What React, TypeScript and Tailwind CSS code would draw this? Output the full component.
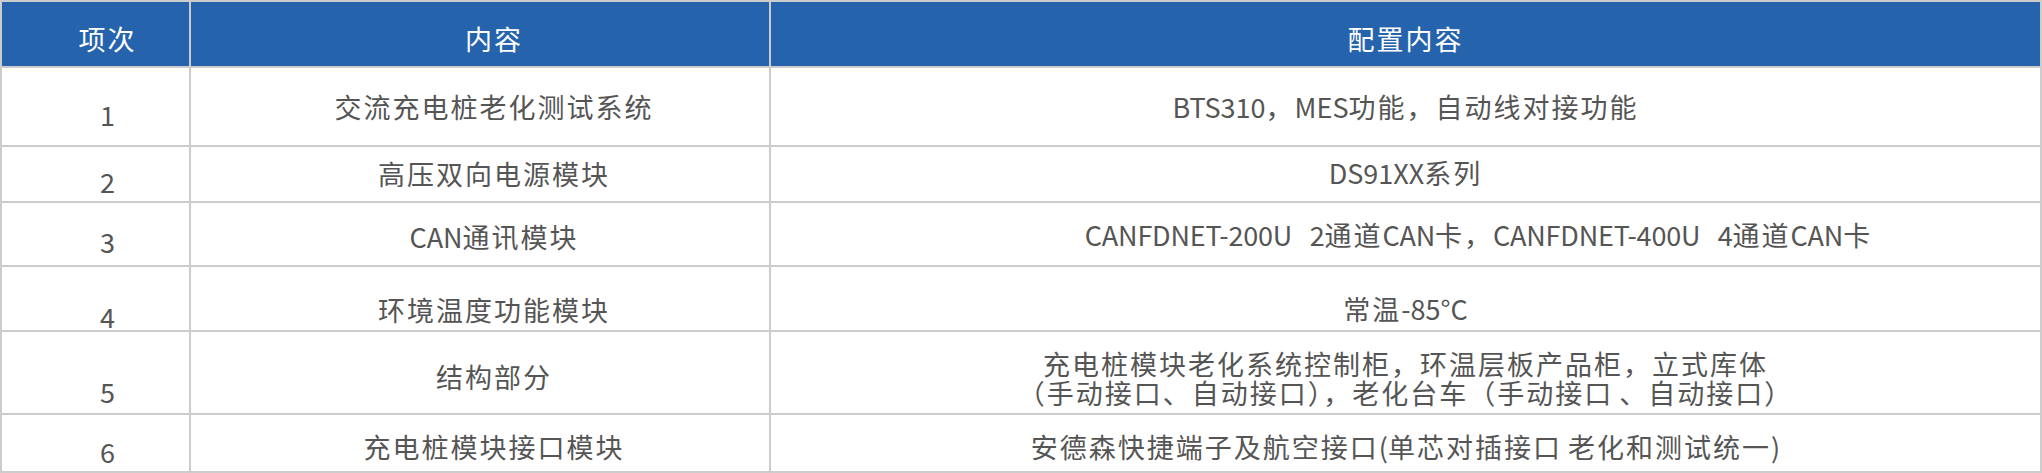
const rows = [
  {
    no: "1",
    name: "交流充电桩老化测试系统",
    config: ["BTS310，MES功能，自动线对接功能"],
    noPad: "pt-[32px]",
    namePad: "pt-[24px]",
    configPad: "pt-[24px]",
    latin: "",
  },
  {
    no: "2",
    name: "高压双向电源模块",
    config: ["DS91XX系列"],
    noPad: "pt-[20px]",
    namePad: "pt-[12px]",
    configPad: "pt-[11px]",
    latin: "",
  },
  {
    no: "3",
    name: "CAN通讯模块",
    config: ["CANFDNET-200U\u00a0\u00a0\u00a02通道CAN卡，CANFDNET-400U\u00a0\u00a0\u00a04通道CAN卡"],
    noPad: "pt-[24px]",
    namePad: "pt-[19px]",
    configPad: "pt-[17px] pl-[146px]",
    latin: "tracking-[-0.2px]",
  },
  {
    no: "4",
    name: "环境温度功能模块",
    config: ["常温-85°C"],
    noPad: "pt-[35px]",
    namePad: "pt-[28px]",
    configPad: "pt-[27px]",
    latin: "",
  },
  {
    no: "5",
    name: "结构部分",
    config: [
      "充电桩模块老化系统控制柜，环温层板产品柜，立式库体",
      "（手动接口、自动接口），老化台车（手动接口 、自动接口）",
    ],
    noPad: "pt-[45px]",
    namePad: "pt-[30px]",
    configPad: "pt-[17px]",
    latin: "",
  },
  {
    no: "6",
    name: "充电桩模块接口模块",
    config: ["安德森快捷端子及航空接口(单芯对插接口 老化和测试统一)"],
    noPad: "pt-[22px]",
    namePad: "pt-[17px]",
    configPad: "pt-[17px]",
    latin: "",
  },
];

// CJK runs are set a little wider than the latin ones
function Txt({ text, latin = "" }: { text: string; latin?: string }) {
  const parts = text.split(/([\u3000-\u303f\u4e00-\u9fff\uff00-\uffef]+)/);
  return (
    <>
      {parts.map((p, i) =>
        i % 2 === 1 ? (
          <span key={i} className="tracking-[2px]">
            {p}
          </span>
        ) : (
          <span key={i} className={latin}>
            {p}
          </span>
        )
      )}
    </>
  );
}

export default function App() {
  return (
    <div className="w-[2042px] h-[473px] bg-white font-['Noto_Sans_CJK_SC','Noto_Sans',sans-serif] text-[27px] leading-[29px]">
      <div className="grid grid-cols-[187px_578px_1fr] grid-rows-[64px_77px_54px_62px_63px_81px_56px] gap-[2px] bg-[#cccccc] p-[2px]">
        <div className="bg-[#2563ad] pt-[22px] pl-[24px] text-center text-white tracking-[2px]">项次</div>
        <div className="bg-[#2563ad] pt-[22px] pl-[28px] text-center text-white tracking-[2px]">内容</div>
        <div className="bg-[#2563ad] pt-[22px] text-center text-white tracking-[2px]">配置内容</div>
        {rows.map((r) => (
          <Row key={r.no} row={r} />
        ))}
      </div>
    </div>
  );
}

function Row({ row }: { row: (typeof rows)[number] }) {
  return (
    <>
      <div className={`bg-white pl-[24px] text-center text-[#555555] ${row.noPad}`}>{row.no}</div>
      <div className={`bg-white pl-[28px] text-center text-[#555555] whitespace-nowrap ${row.namePad}`}>
        <Txt text={row.name} />
      </div>
      <div className={`bg-white text-center text-[#555555] whitespace-nowrap ${row.configPad}`}>
        {row.config.map((line) => (
          <div key={line}>
            <Txt text={line} latin={row.latin} />
          </div>
        ))}
      </div>
    </>
  );
}
